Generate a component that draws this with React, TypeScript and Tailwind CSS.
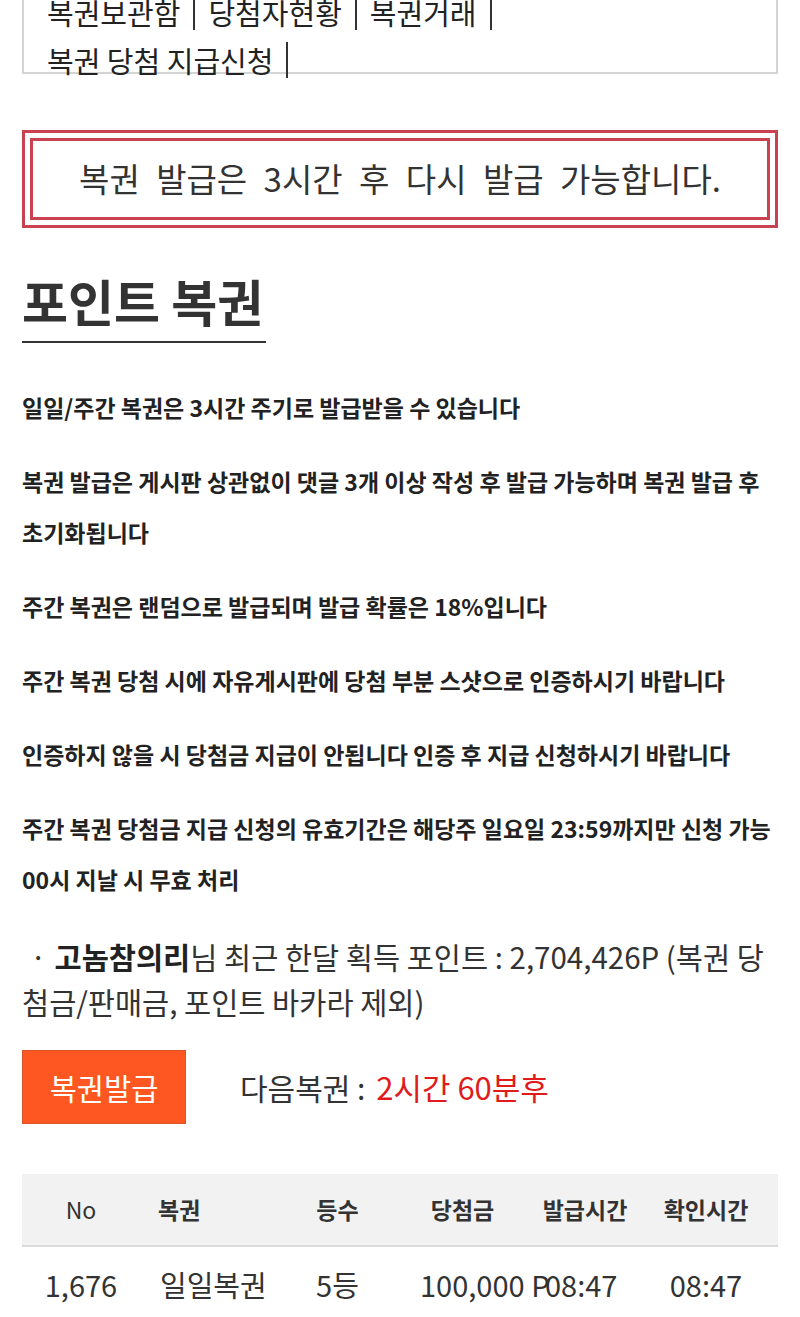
const LINKS = [['복권보관함', '당첨자현황', '복권거래'], ['복권 당첨 지급신청']];

const RULES = [
  '일일/주간 복권은 3시간 주기로 발급받을 수 있습니다',
  '복권 발급은 게시판 상관없이 댓글 3개 이상 작성 후 발급 가능하며 복권 발급 후 초기화됩니다',
  '주간 복권은 랜덤으로 발급되며 발급 확률은 18%입니다',
  '주간 복권 당첨 시에 자유게시판에 당첨 부분 스샷으로 인증하시기 바랍니다',
  '인증하지 않을 시 당첨금 지급이 안됩니다 인증 후 지급 신청하시기 바랍니다',
  '주간 복권 당첨금 지급 신청의 유효기간은 해당주 일요일 23:59까지만 신청 가능 00시 지날 시 무효 처리',
];

export default function App() {
  return (
    <div className="min-h-screen overflow-hidden bg-white px-[22px] font-['Noto_Sans_CJK_KR','Noto_Sans',sans-serif] text-[#333]">
      {/* Sub menu box (scrolled partly off the top) */}
      <div className="-mt-[40px] h-[114px] border-2 border-[#d4d4d4] pl-[23px] pt-[26px] text-[29px] leading-[48px] text-[#222]">
        {LINKS.map((row, i) => (
          <div key={i} className="flex items-center whitespace-nowrap">
            {row.map((l) => (
              <span key={l} className="flex items-center">
                <span>{l}</span>
                <span className="mx-[13px] h-[36px] w-[2px] bg-[#333]" />
              </span>
            ))}
          </div>
        ))}
      </div>

      {/* Notice */}
      <div className="mt-[56px] border-[3px] border-[#c8434f] p-[5px]">
        <div className="flex h-[82px] items-center justify-center border-[3px] border-[#c8434f] text-[33px] text-[#333] [word-spacing:9px]">
          복권 발급은 3시간 후 다시 발급 가능합니다.
        </div>
      </div>

      {/* Title */}
      <h2 className="mt-[40px] inline-block border-b-2 border-[#333] pb-[9px] pr-[3px] text-[50px] font-bold leading-[64px] text-[#333]">
        포인트 복권
      </h2>

      {/* Rules */}
      <div className="mt-[39px] space-y-[23px] break-keep text-[23px] font-bold leading-[51px] text-[#222]">
        {RULES.map((r) => (
          <p key={r}>{r}</p>
        ))}
      </div>

      {/* Points */}
      <p className="mt-[29px] text-[29.5px] leading-[45px] text-[#333]">
        <span className="mx-[8px]">·</span>
        <b className="font-bold text-[#222]">고놈참의리</b>님 최근 한달 획득 포인트 : 2,704,426P (복권 당첨금/판매금, 포인트 바카라 제외)
      </p>

      {/* Issue */}
      <div className="mt-[26px] flex items-center">
        <button className="flex h-[74px] w-[164px] items-center justify-center border border-[#d9532a] bg-[#ff5722] text-[29.5px] text-white">
          복권발급
        </button>
        <div className="ml-[54px] text-[30px] text-[#333]">
          다음복권 : <span className="ml-[4px] text-[31px] text-[#e01b1b]">2시간 60분후</span>
        </div>
      </div>

      {/* Table */}
      <div className="mt-[50px]">
        <div className="grid h-[73px] grid-cols-[118px_145px_105px_145px_100px_142px] items-center border-b-2 border-[#dcdcdc] bg-[#f2f2f2] text-[23px] text-[#333]">
          <div className="text-center">No</div>
          <div className="pl-[18px] font-bold">복권</div>
          <div className="text-center font-bold">등수</div>
          <div className="text-center font-bold">당첨금</div>
          <div className="text-center font-bold">발급시간</div>
          <div className="text-center font-bold">확인시간</div>
        </div>
        <div className="grid h-[76px] grid-cols-[118px_145px_105px_145px_100px_142px] items-center whitespace-nowrap text-[29px] text-[#333]">
          <div className="text-center">1,676</div>
          <div className="pl-[20px]">일일복권</div>
          <div className="text-center">5등</div>
          <div className="pl-[30px]">100,000 P</div>
          <div className="pl-[10px]">08:47</div>
          <div className="text-center">08:47</div>
        </div>
      </div>
    </div>
  );
}
